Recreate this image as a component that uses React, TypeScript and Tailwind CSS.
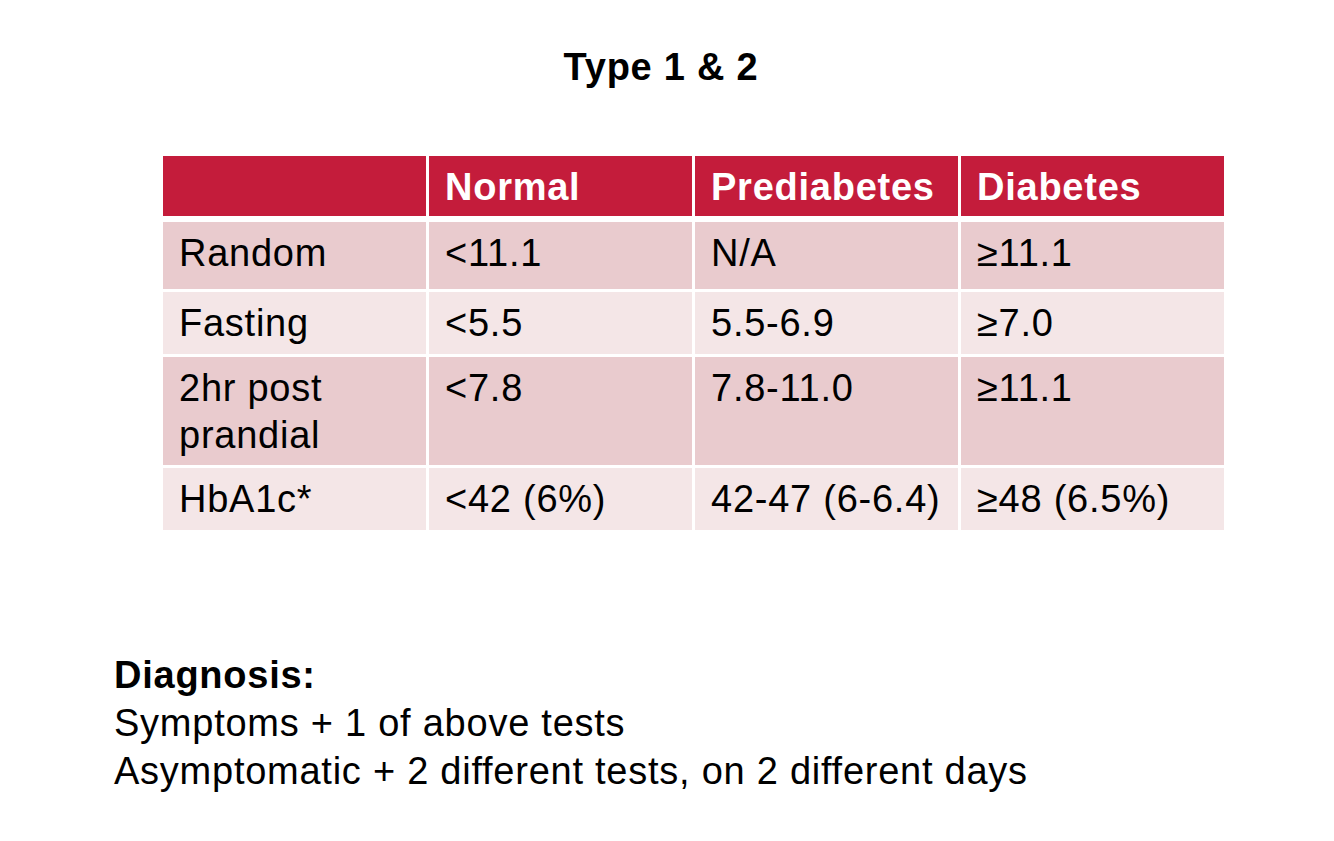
const rows = [
  { label: "Random", normal: "<11.1", pre: "N/A", dia: "≥11.1", h: "h-[67px]", bg: "bg-[#e9cbce]" },
  { label: "Fasting", normal: "<5.5", pre: "5.5-6.9", dia: "≥7.0", h: "h-[62px]", bg: "bg-[#f4e6e7]" },
  { label: "2hr post prandial", normal: "<7.8", pre: "7.8-11.0", dia: "≥11.1", h: "h-[108px]", bg: "bg-[#e9cbce]" },
  { label: "HbA1c*", normal: "<42 (6%)", pre: "42-47 (6-6.4)", dia: "≥48 (6.5%)", h: "h-[62px]", bg: "bg-[#f4e6e7]" },
];

const App = () => {
  return (
    <div className="w-[1334px] h-[841px] bg-white text-black font-['Liberation_Sans',Arial,sans-serif] tracking-[0.75px] overflow-hidden">
      <h1 className="pt-[44px] pr-[12px] text-center text-[38px] leading-[46px] font-bold">
        Type 1 &amp; 2
      </h1>

      <div className="mt-[66px] ml-[163px] w-[1061px] flex flex-col gap-[3px] text-[38px] leading-[47px]">
        <div className="grid grid-cols-4 gap-[3px] h-[60px] mb-[3px]">
          <div className="bg-[#c41c3b]" />
          <div className="bg-[#c41c3b] text-white font-bold pl-[16px] pt-[8px]">Normal</div>
          <div className="bg-[#c41c3b] text-white font-bold pl-[16px] pt-[8px]">Prediabetes</div>
          <div className="bg-[#c41c3b] text-white font-bold pl-[16px] pt-[8px]">Diabetes</div>
        </div>
        {rows.map((r) => (
          <div key={r.label} className={`grid grid-cols-4 gap-[3px] ${r.h}`}>
            <div className={`${r.bg} pl-[16px] pt-[8px] pr-[60px]`}>{r.label}</div>
            <div className={`${r.bg} pl-[16px] pt-[8px]`}>{r.normal}</div>
            <div className={`${r.bg} pl-[16px] pt-[8px]`}>{r.pre}</div>
            <div className={`${r.bg} pl-[16px] pt-[8px]`}>{r.dia}</div>
          </div>
        ))}
      </div>

      <div className="mt-[121px] ml-[114px] text-[38px] leading-[48px]">
        <p className="font-bold">Diagnosis:</p>
        <p>Symptoms + 1 of above tests</p>
        <p>Asymptomatic + 2 different tests, on 2 different days</p>
      </div>
    </div>
  );
};

export default App;
